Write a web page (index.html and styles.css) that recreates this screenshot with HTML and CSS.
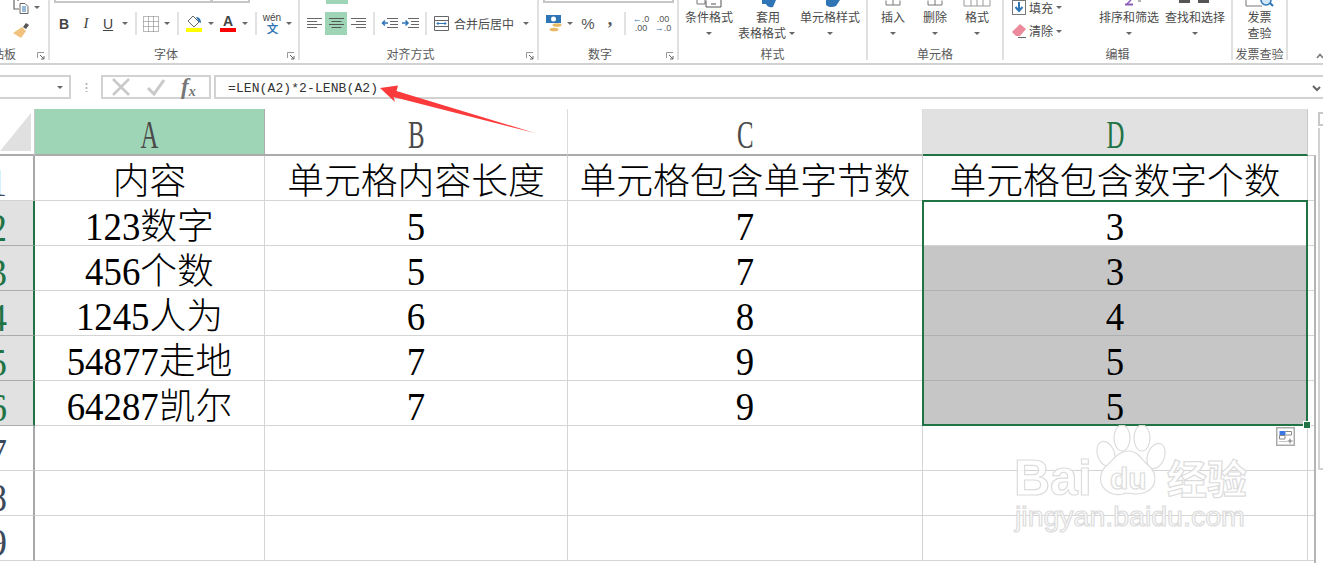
FILE: index.html
```html
<!DOCTYPE html>
<html lang="zh-CN">
<head>
<meta charset="utf-8">
<title>Excel</title>
<link rel="stylesheet" href="styles.css">
</head>
<body>
<div class="app">
  <div class="ribbon">
    <section class="group g-clip">
      <div class="body clip-body">
        <div class="clip-row">
          <svg width="16" height="14" viewBox="0 0 16 14"><path d="M1 0v9h5M5 0v1" fill="none" stroke="#666" stroke-width="1.2"/><path d="M7 3.5h5l3 3v7H7z" fill="#fff" stroke="#666"/><path d="M9 7h4M9 9h4M9 11h4" stroke="#2e75b6"/></svg>
          <span class="dd dd-clip"></span>
        </div>
        <svg class="brush" width="17" height="16" viewBox="0 0 17 16"><path d="M10 5l3-4 3 2-3 4z" fill="#555"/><path d="M9 5l4 4-5 7-8-5z" fill="#f0c27d"/></svg>
      </div>
      <div class="label label-clip">粘贴板</div>
      <svg class="launcher" width="8" height="8" viewBox="0 0 8 8"><path d="M.5 6V.5H7" fill="none" stroke="#999"/><path d="M3 3l4 4M7 4v3H4" fill="none" stroke="#666"/></svg>
    </section>

    <section class="group g-font has-launcher">
      <div class="body">
        <div class="strip font-strip"><i class="input in-a"></i><i class="input in-b"></i></div>
        <div class="row">
          <span class="tool t22 bold">B</span>
          <span class="tool t22 ital">I</span>
          <span class="tool t22 under">U</span>
          <span class="dd"></span>
          <i class="sep"></i>
          <span class="tool t20"><svg width="16" height="16" viewBox="0 0 16 16"><path d="M.5 .5h15v15H.5zM5.5 .5v15M10.5 .5v15M.5 5.5h15M.5 10.5h15" fill="none" stroke="#777" stroke-dasharray="1 1"/></svg></span>
          <span class="dd"></span>
          <i class="sep"></i>
          <span class="tool t22 stack"><svg width="16" height="13" viewBox="0 0 16 13"><path d="M7 1l6 6-5 5-6-6z" fill="#fff" stroke="#666"/><path d="M10 2c3 0 5 2 5 6l-2-1z" fill="#2e75b6"/></svg><i class="bar yellow"></i></span>
          <span class="dd"></span>
          <span class="tool t22 stack"><b class="a-glyph">A</b><i class="bar red"></i></span>
          <span class="dd"></span>
          <i class="sep"></i>
          <span class="tool t22 stack wen"><span class="wen-top">wén</span><span class="wen-bot">文</span></span>
          <span class="dd"></span>
        </div>
      </div>
      <div class="label">字体</div>
      <svg class="launcher" width="8" height="8" viewBox="0 0 8 8"><path d="M.5 6V.5H7" fill="none" stroke="#999"/><path d="M3 3l4 4M7 4v3H4" fill="none" stroke="#666"/></svg>
    </section>

    <section class="group g-align has-launcher">
      <div class="body">
        <div class="strip"><i class="green-stub"></i></div>
        <div class="row">
          <span class="tool t22"><svg width="15" height="11" viewBox="0 0 15 11"><path d="M0 .5h15M0 3.5h10M0 6.5h15M0 9.5h10" stroke="#666"/></svg></span>
          <span class="tool t22 active"><svg width="15" height="11" viewBox="0 0 15 11"><path d="M0 .5h15M2.500 3.500h10M0 6.500h15M2.500 9.500h10" stroke="#555"/></svg></span>
          <span class="tool t22"><svg width="15" height="11" viewBox="0 0 15 11"><path d="M0 .5h15M5 3.500h10M0 6.500h15M5 9.500h10" stroke="#666"/></svg></span>
          <i class="sep"></i>
          <span class="tool t20"><svg width="17" height="11" viewBox="0 0 17 11"><path d="M6 .5h11M9 3.500h8M9 6.500h8M6 9.500h11" stroke="#666"/><path d="M7 5H1.500M4 2.500L1.500 5 4 7.500" fill="none" stroke="#2e75b6" stroke-width="1.500"/></svg></span>
          <span class="tool t22"><svg width="17" height="11" viewBox="0 0 17 11"><path d="M6 .5h11M9 3.500h8M9 6.500h8M6 9.500h11" stroke="#666"/><path d="M0 5h6M3.500 2.500L6 5 3.500 7.500" fill="none" stroke="#2e75b6" stroke-width="1.500"/></svg></span>
          <i class="sep"></i>
          <span class="tool t20"><svg width="15" height="15" viewBox="0 0 15 15"><path d="M.5 .5h14v14H.5zM.5 4.500h14M.5 10.500h14" fill="none" stroke="#666"/><path d="M3 7.500h9M4.500 6L3 7.500 4.500 9M10.500 6L12 7.500 10.500 9" fill="none" stroke="#2e75b6"/></svg></span>
          <span class="merge-text">合并后居中</span>
          <span class="dd merge-dd"></span>
        </div>
      </div>
      <div class="label">对齐方式</div>
      <svg class="launcher" width="8" height="8" viewBox="0 0 8 8"><path d="M.5 6V.5H7" fill="none" stroke="#999"/><path d="M3 3l4 4M7 4v3H4" fill="none" stroke="#666"/></svg>
    </section>

    <section class="group g-num has-launcher">
      <div class="body">
        <div class="strip num-strip"><i class="input in-c"></i></div>
        <div class="row">
          <span class="tool t20"><svg width="16" height="17" viewBox="0 0 16 17"><rect x="0" y="0" width="15" height="8" fill="#2e75b6"/><circle cx="7.500" cy="4" r="2.500" fill="#fff"/><ellipse cx="11" cy="10" rx="4.500" ry="1.800" fill="#e8b863"/><ellipse cx="8" cy="14.500" rx="4.500" ry="1.800" fill="#e8b863"/></svg></span>
          <span class="dd"></span>
          <span class="tool t24 pct">%</span>
          <span class="tool t20 comma">,</span>
          <i class="sep"></i>
          <span class="tool t22 dec"><span class="dec-top"><em>←</em>.0</span><span>.00</span></span>
          <span class="tool t22 dec"><span>.00</span><span class="dec-top"><em>→</em>.0</span></span>
        </div>
      </div>
      <div class="label">数字</div>
      <svg class="launcher" width="8" height="8" viewBox="0 0 8 8"><path d="M.5 6V.5H7" fill="none" stroke="#999"/><path d="M3 3l4 4M7 4v3H4" fill="none" stroke="#666"/></svg>
    </section>

    <section class="group g-styles">
      <div class="body bigs">
        <div class="big w48">
          <svg class="stub" width="40" height="9" viewBox="0 0 40 9"><path d="M8 0v4h8v-4" fill="#fff" stroke="#777"/><path d="M17 .5v6.500h15v-7M22 4h5" fill="#fff" stroke="#555"/></svg>
          <span>条件格式</span><span class="dd big-dd"></span>
        </div>
        <div class="big w60 mid">
          <svg class="stub" width="40" height="9" viewBox="0 0 40 9"><path d="M14 0h14l-3 7c-4 1-6-1-7-3h-4z" fill="#2e75b6"/></svg>
          <span>套用</span>
          <span class="line-dd">表格格式<span class="dd"></span></span>
        </div>
        <div class="big w60">
          <svg class="stub" width="40" height="9" viewBox="0 0 40 9"><path d="M16 0h14l-4 6c-4 2-8 1-10-1z" fill="#2e75b6"/></svg>
          <span>单元格样式</span><span class="dd big-dd"></span>
        </div>
      </div>
      <div class="label">样式</div>
    </section>

    <section class="group g-cells">
      <div class="body bigs">
        <div class="big w42">
          <svg class="stub" width="20" height="9" viewBox="0 0 20 9"><path d="M3 .5v4.500h14V.5M10 0v5" fill="none" stroke="#777"/></svg>
          <span>插入</span><span class="dd big-dd"></span>
        </div>
        <div class="big w42">
          <svg class="stub" width="20" height="9" viewBox="0 0 20 9"><path d="M3 .5v4.500h14V.5M10 0v5" fill="none" stroke="#777"/></svg>
          <span>删除</span><span class="dd big-dd"></span>
        </div>
        <div class="big w42">
          <svg class="stub" width="30" height="9" viewBox="0 0 30 9"><path d="M2 0v6h26V0M9 0v6M15 0v6M21 0v6" fill="none" stroke="#999"/></svg>
          <span>格式</span><span class="dd big-dd"></span>
        </div>
      </div>
      <div class="label">单元格</div>
    </section>

    <section class="group g-edit">
      <div class="body bigs">
        <div class="edit-col">
          <div class="edit-row fill-row">
            <svg width="14" height="15" viewBox="0 0 14 15"><rect x=".5" y=".5" width="13" height="14" fill="#fff" stroke="#777"/><path d="M7 2v8M3.500 7L7 11l3.500-4" fill="none" stroke="#2e75b6" stroke-width="2"/></svg>
            <span>填充</span><span class="dd"></span>
          </div>
          <div class="edit-row">
            <svg width="14" height="14" viewBox="0 0 14 14"><path d="M8 0l6 5-6 7H4L0 8z" fill="#ea8a9a"/><path d="M6 13.500h8" stroke="#666"/></svg>
            <span>清除</span><span class="dd"></span>
          </div>
        </div>
        <div class="big w60 sort">
          <svg class="stub" width="40" height="9" viewBox="0 0 40 9"><path d="M16 4.500h8" stroke="#8a5cb8" stroke-width="2"/><path d="M22 0l-4 4" stroke="#8a5cb8" stroke-width="1.500"/><path d="M29 1h3" stroke="#666"/></svg>
          <span>排序和筛选</span><span class="dd big-dd"></span>
        </div>
        <div class="big w60 find">
          <svg class="stub" width="40" height="9" viewBox="0 0 40 9"><rect x="4" y="0" width="11" height="3" fill="#555"/><rect x="23" y="0" width="11" height="3" fill="#555"/></svg>
          <span>查找和选择</span><span class="dd big-dd"></span>
        </div>
      </div>
      <div class="label">编辑</div>
    </section>

    <section class="group g-inv">
      <div class="body bigs">
        <div class="big w53">
          <svg class="stub" width="34" height="9" viewBox="0 0 34 9"><path d="M3 0v6h16" fill="none" stroke="#777"/><circle cx="23" cy="0" r="5" fill="#cfe6f6" stroke="#2e75b6" stroke-width="1.500"/><path d="M27 3l3 3" stroke="#2e75b6" stroke-width="2"/></svg>
          <span>发票</span><span>查验</span>
        </div>
      </div>
      <div class="label">发票查验</div>
    </section>

    <svg class="collapse" width="8" height="6" viewBox="0 0 8 6"><path d="M1 5l3-3.500L7 5" fill="none" stroke="#777" stroke-width="1.500"/></svg>
  </div>

  <div class="fbar">
    <div class="namebox"><span class="dd"></span></div>
    <div class="dots"></div>
    <div class="fx">
      <svg width="20" height="18" viewBox="0 0 20 18"><path d="M2 1l16 16M18 1L2 17" stroke="#c9c9c9" stroke-width="2.500"/></svg>
      <svg width="20" height="18" viewBox="0 0 20 18"><path d="M2 10l6 6L18 2" fill="none" stroke="#c9c9c9" stroke-width="3"/></svg>
      <span class="fx-glyph">f<sub>x</sub></span>
    </div>
    <div class="formula">=LEN(A2)*2-LENB(A2)<svg class="fx-expand" width="9" height="8" viewBox="0 0 9 8"><path d="M1 1l4 4 3-3" fill="none" stroke="#666" stroke-width="2"/></svg></div>
  </div>

  <div class="sheet">
    <div class="grid">
      <div class="corner"><svg width="32" height="42" viewBox="0 0 32 42"><path d="M31 3v38H0z" fill="#e0e0e0"/></svg></div>
      <div class="ch ch-a"><span>A</span></div>
      <div class="ch"><span>B</span></div>
      <div class="ch"><span>C</span></div>
      <div class="ch ch-d"><span>D</span></div>

      <div class="rh"><span class="n">1</span></div>
      <div class="c">内容</div>
      <div class="c">单元格内容长度</div>
      <div class="c">单元格包含单字节数</div>
      <div class="c">单元格包含数字个数</div>

      <div class="rh on"><span class="n">2</span></div>
      <div class="c"><span class="n">123</span>数字</div>
      <div class="c"><span class="n">5</span></div>
      <div class="c"><span class="n">7</span></div>
      <div class="c"><span class="n">3</span></div>

      <div class="rh on"><span class="n">3</span></div>
      <div class="c"><span class="n">456</span>个数</div>
      <div class="c"><span class="n">5</span></div>
      <div class="c"><span class="n">7</span></div>
      <div class="c gray"><span class="n">3</span></div>

      <div class="rh on"><span class="n">4</span></div>
      <div class="c"><span class="n">1245</span>人为</div>
      <div class="c"><span class="n">6</span></div>
      <div class="c"><span class="n">8</span></div>
      <div class="c gray"><span class="n">4</span></div>

      <div class="rh on"><span class="n">5</span></div>
      <div class="c"><span class="n">54877</span>走地</div>
      <div class="c"><span class="n">7</span></div>
      <div class="c"><span class="n">9</span></div>
      <div class="c gray"><span class="n">5</span></div>

      <div class="rh on"><span class="n">6</span></div>
      <div class="c"><span class="n">64287</span>凯尔</div>
      <div class="c"><span class="n">7</span></div>
      <div class="c"><span class="n">9</span></div>
      <div class="c gray"><span class="n">5</span></div>

      <div class="rh"><span class="n">7</span></div><div class="c"></div><div class="c"></div><div class="c"></div><div class="c"></div>
      <div class="rh"><span class="n">8</span></div><div class="c"></div><div class="c"></div><div class="c"></div><div class="c"></div>
      <div class="rh"><span class="n">9</span></div><div class="c"></div><div class="c"></div><div class="c"></div><div class="c"></div>

      <div class="sel">
        <i class="handle"></i>
        <svg class="paste" width="19" height="19" viewBox="0 0 19 19"><rect x=".75" y=".75" width="17.500" height="17.500" fill="#fff" stroke="#aaa" stroke-width="1.500"/><rect x="3.500" y="4" width="6" height="4" fill="#3b78e0"/><path d="M9.500 4.500h6v3.500h-6M3.500 8.500h5.500v3.500H3.500z" fill="none" stroke="#888"/><path d="M3.500 14.500h7" stroke="#888" stroke-dasharray="1 1"/><path d="M14 11.500v5M11.500 14h5" stroke="#777"/></svg>
      </div>
    </div>
    <div class="side"></div>
    <div class="vscroll"><div class="vbtn"></div><div class="vthumb"></div></div>
  </div>

  <svg class="arrow" width="170" height="60" viewBox="375 80 170 60"><path d="M380 88L398 85.500L396.500 91L535 133L393.500 97L395 102z" fill="#fb3b3b"/></svg>

  <svg class="watermark" width="250" height="125" viewBox="1010 425 250 125">
    <g class="wm">
      <ellipse cx="1106" cy="454" rx="8.500" ry="13" transform="rotate(-20 1106 454)"/>
      <ellipse cx="1122" cy="438" rx="8" ry="13"/>
      <ellipse cx="1142" cy="438" rx="8" ry="13"/>
      <ellipse cx="1156" cy="456" rx="8.500" ry="13" transform="rotate(20 1156 456)"/>
      <path d="M1129 451c10 0 13 10 20 15 9 7 10 26-12 28-6 0-10-2-14 0-18 4-30-14-17-28 8-6 11-15 23-15z"/>
      <text class="wm-big" x="1014" y="495">Bai</text>
      <text class="wm-du" x="1110" y="489">du</text>
      <text class="wm-cn" x="1167" y="494">经验</text>
      <text class="wm-url" x="1015" y="526">jingyan.baidu.com</text>
    </g>
  </svg>
</div>
</body>
</html>
```
FILE: styles.css
```css
* { box-sizing: border-box; }
html, body { margin: 0; padding: 0; }
body {
  width: 1323px;
  height: 563px;
  overflow: hidden;
  background: #fff;
  font-family: "Noto Sans CJK SC", "Liberation Sans", sans-serif;
  color: #444;
}
.app { position: relative; width: 1323px; height: 563px; overflow: hidden; }
i, em { font-style: normal; }

/* ribbon */
.ribbon {
  position: relative;
  display: flex;
  height: 65px;
  border-bottom: 2px solid #d2d2d2;
  background: #fff;
  font-size: 12px;
  line-height: 16px;
  color: #4a4a4a;
}
.group {
  position: relative;
  height: 60px;
  border-right: 2px solid #e0e0e0;
  display: flex;
  flex-direction: column;
}
.body { height: 46px; flex: none; }
.label { height: 16px; text-align: center; color: #5a5a5a; white-space: nowrap; line-height: 16px; }
.has-launcher .label { padding-right: 16px; }
.label-clip { margin-left: -20px; text-align: left; width: 40px; }
.launcher { position: absolute; right: 3px; bottom: 0; }

.g-clip { width: 50px; }
.g-font { width: 250px; }
.g-align { width: 239px; }
.g-num { width: 140px; }
.g-styles { width: 189px; }
.g-cells { width: 136px; }
.g-edit { width: 229px; }
.g-inv { width: 55px; }

.clip-body { padding-left: 13px; }
.clip-row { display: flex; align-items: center; height: 14px; }
.dd-clip { margin-left: 2px; }
.brush { display: block; margin-top: 8px; }

.strip { height: 4px; display: flex; }
.input { display: block; height: 3px; border: 2px solid #c6c6c6; border-top: 0; }
.in-a { margin-left: 4px; width: 158px; }
.in-b { width: 39px; margin-left: -1px; }
.in-c { margin-left: 4px; width: 131px; }
.green-stub { display: block; margin-left: 26px; width: 22px; height: 4px; background: #9fd5b7; }

.row { display: flex; align-items: center; height: 23px; margin-top: 8px; padding-left: 3px; }
.g-num .row { padding-left: 5px; }
.tool { display: flex; align-items: center; justify-content: center; height: 23px; flex: none; }
.t20 { width: 20px; }
.t22 { width: 22px; }
.t24 { width: 24px; }
.active { background: #9fd5b7; }
.sep { display: block; flex: none; width: 2px; height: 23px; margin: 0 4px; background: #e2e2e2; }
.dd { display: inline-flex; align-items: center; justify-content: center; flex: none; width: 12px; height: 8px; }
.dd::before {
  content: "";
  border-top: 3px solid #666;
  border-left: 3px solid transparent;
  border-right: 3px solid transparent;
}
.bold { font: bold 14px "Liberation Sans", sans-serif; color: #444; }
.ital { font: italic 15px "Liberation Serif", serif; color: #444; }
.under { font: 14px "Liberation Sans", sans-serif; text-decoration: underline; color: #444; }
.stack { flex-direction: column; gap: 0; }
.bar { display: block; width: 16px; height: 4px; }
.yellow { background: #ffff00; }
.red { background: #ff0000; }
.a-glyph { font: bold 14px/13px "Liberation Sans", sans-serif; color: #444; }
.wen { font-family: "Liberation Sans", sans-serif; }
.wen-top { font-size: 10px; line-height: 11px; color: #444; }
.wen-bot { font-size: 11px; line-height: 12px; color: #2e75b6; font-weight: bold; }
.merge-text { margin-left: 3px; width: 60px; white-space: nowrap; }
.merge-dd { margin-left: 6px; }
.pct { font: 15px "Liberation Sans", sans-serif; color: #555; }
.comma { font: bold 18px "Liberation Serif", serif; color: #555; padding-bottom: 8px; }
.dec { flex-direction: column; font: 9px/9px "Liberation Sans", sans-serif; color: #555; }
.dec em { color: #2e75b6; font-weight: bold; }

.bigs { display: flex; }
.g-styles .bigs { padding-left: 6px; gap: 4px; }
.g-cells .bigs { padding-left: 4px; }
.big { display: flex; flex-direction: column; align-items: center; flex: none; white-space: nowrap; }
.big .stub { display: block; height: 9px; flex: none; }
.w42 { width: 42px; }
.w48 { width: 48px; }
.w53 { width: 53px; }
.w60 { width: 60px; }
.mid { margin: 0 -2px 0 1px; }
.big-dd { margin-top: 4px; }
.line-dd { display: flex; align-items: center; }
.line-dd .dd { width: 12px; }
.edit-col { width: 95px; padding-left: 8px; flex: none; }
.edit-row { display: flex; align-items: center; gap: 3px; height: 15px; }
.edit-row + .edit-row { margin-top: 8px; height: 16px; }
.edit-row .dd { margin-left: -3px; }
.find { margin-left: 6px; }
.collapse { position: absolute; left: 1316px; top: 53px; }

/* formula bar */
.fbar { display: flex; height: 24px; margin-top: 10px; background: #fff; }
.namebox {
  width: 71px;
  border: 2px solid #d2d2d2;
  border-left: 0;
  display: flex;
  align-items: center;
  justify-content: flex-end;
  padding-right: 3px;
}
.dots { width: 30px; background: radial-gradient(circle, #b5b5b5 1px, transparent 1.2px) center top / 3px 4px repeat-y; margin: 7px 0; }
.fx {
  width: 110px;
  border: 2px solid #d2d2d2;
  display: flex;
  align-items: center;
  gap: 15px;
  padding-left: 8px;
}
.fx-glyph { font: italic bold 23px/20px "Liberation Serif", serif; color: #777; white-space: nowrap; }
.fx-glyph sub { font-size: 14px; vertical-align: -2px; line-height: 0; }
.formula {
  position: relative;
  flex: 1;
  margin-left: 3px;
  margin-right: -3px;
  border: 2px solid #d2d2d2;
  padding: 2px 0 0 12px;
  font: 13px/20px "Liberation Mono", monospace;
  letter-spacing: .1px;
  color: #333;
  white-space: nowrap;
}
.fx-expand { position: absolute; right: 3px; top: 8px; }

/* sheet */
.sheet { display: flex; margin-top: 10px; height: 454px; overflow: hidden; }
.grid {
  position: relative;
  display: grid;
  flex: none;
  width: 1308px;
  grid-template-columns: 35px 230px 303px 355px 385px;
  grid-template-rows: 47px repeat(9, 45px);
}
.corner { border-right: 1px solid #c8c8c8; border-bottom: 2px solid #ababab; padding-top: 1px; }
.corner svg { display: block; }
.ch {
  display: flex;
  align-items: center;
  justify-content: center;
  border-right: 1px solid #dcdcdc;
  border-bottom: 2px solid #ababab;
  padding-top: 7px;
  font: 40px/1 "Liberation Serif", serif;
  color: #4a4a4a;
}
.ch span { display: inline-block; transform: scaleX(.62); }
.ch-a { background: #9fd5b7; border-right-color: #ababab; }
.ch-d { background: #e1e1e1; color: #217346; border-right-color: #c8c8c8; border-bottom-color: #217346; }
.rh {
  display: flex;
  align-items: center;
  justify-content: flex-end;
  padding: 8px 26px 0 0;
  overflow: hidden;
  border-right: 2px solid #a8a8a8;
  border-bottom: 1px solid #d4d4d4;
  font: 37px/1 "Liberation Serif", serif;
  color: #3c4a5c;
}
.rh.on { background: #e1e1e1; color: #217346; border-right-color: #217346; border-bottom-color: #ababab; }
.c {
  display: flex;
  align-items: center;
  justify-content: center;
  padding-top: 8px;
  border-right: 1px solid #d4d4d4;
  border-bottom: 1px solid #d4d4d4;
  font: 300 36.8px/1 "Liberation Serif", "Noto Sans CJK SC", serif;
  color: #000;
  white-space: nowrap;
}
.gray { background: #c6c6c6; border-color: #b0b0b0; }
.n { display: inline-block; transform: scaleY(1.08); }
.sel {
  position: absolute;
  grid-column: 5;
  grid-row: 3 / 8;
  top: -1px;
  left: -1px;
  right: 0;
  bottom: 0;
  border: 2px solid #217346;
}
.handle {
  position: absolute;
  right: -4px;
  bottom: -4px;
  width: 6px;
  height: 6px;
  background: #217346;
  outline: 1px solid #fff;
}
.paste { position: absolute; right: 11px; top: calc(100% + 3px); display: block; }
.side {
  flex: none;
  width: 8px;
  margin-top: 46px;
  border-top: 1px solid #c8c8c8;
  border-right: 2px solid #b4b4b4;
  background: repeating-linear-gradient(to bottom, transparent 0, transparent 44px, #d4d4d4 44px, #d4d4d4 45px);
}
.vscroll { flex: none; margin-left: 2px; width: 10px; padding-top: 3px; }
.vbtn { height: 14px; border: 2px solid #c8c8c8; border-right: 0; }
.vthumb { height: 342px; margin-top: 2px; border: 2px solid #d2d2d2; border-right: 0; border-top-width: 0; }

/* overlays */
.arrow { position: absolute; left: 375px; top: 80px; }
.watermark { position: absolute; left: 1010px; top: 425px; }
.wm { fill: rgba(255,255,255,.85); stroke: #dcdcdc; stroke-width: 1.200; }
.wm-big { font: bold 50px "Liberation Sans", sans-serif; }
.wm-du { font: bold 30px "Liberation Sans", sans-serif; }
.wm-cn { font: bold 40px "Noto Sans CJK SC", sans-serif; }
.wm-url { font: 28.500px "Liberation Sans", sans-serif; }
```
